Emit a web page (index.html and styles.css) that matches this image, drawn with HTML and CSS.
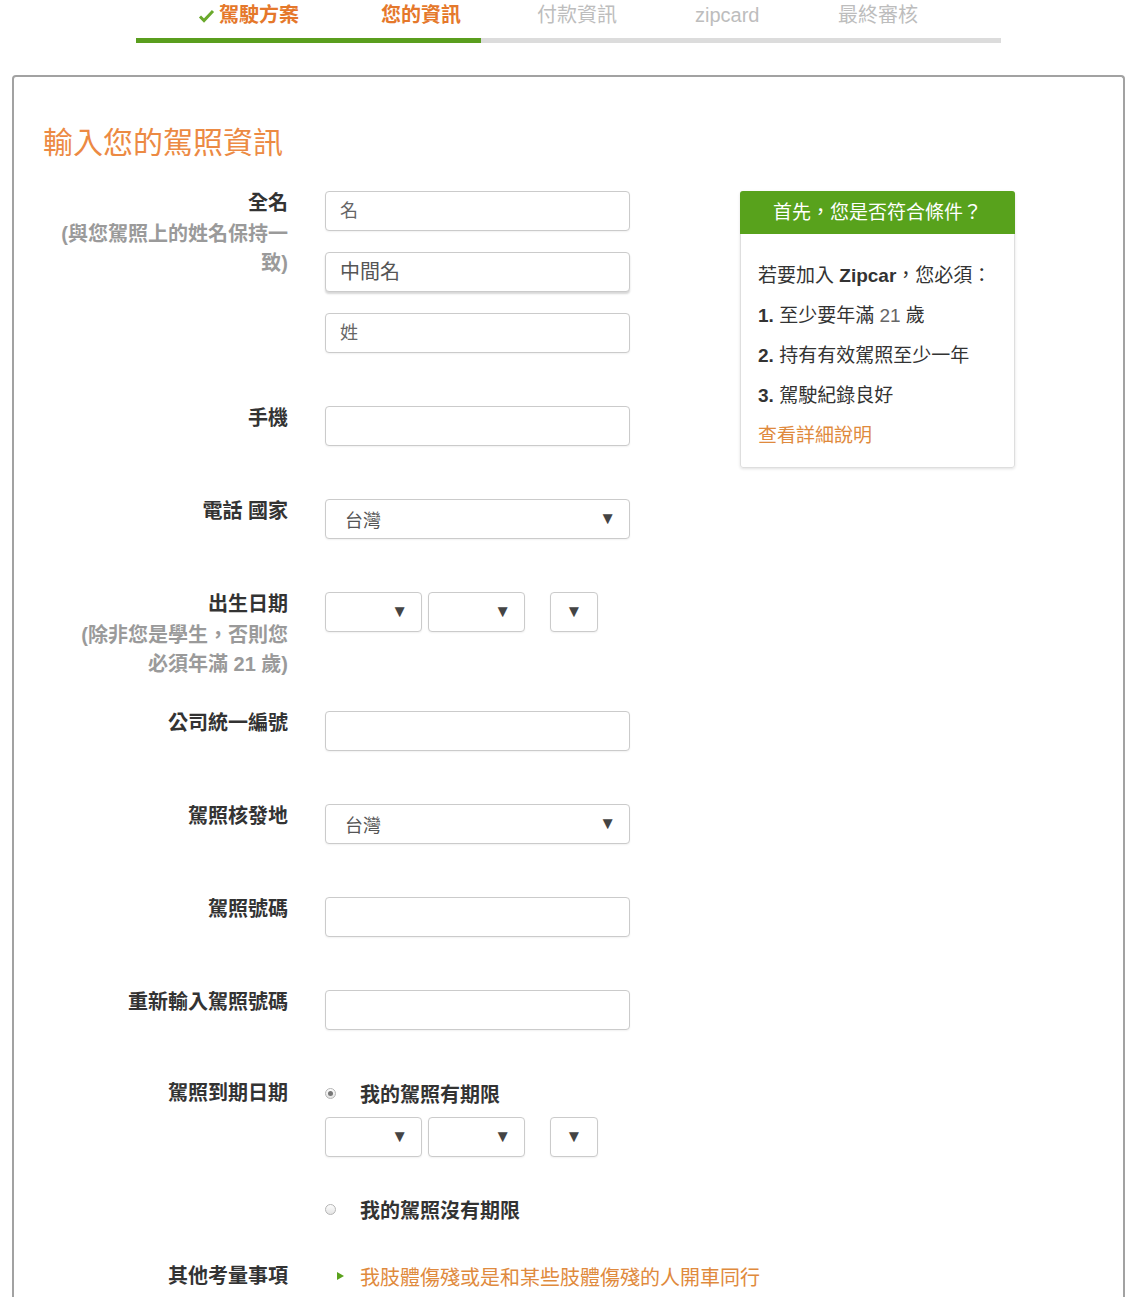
FILE: index.html
```html
<!DOCTYPE html>
<html lang="zh-Hant">
<head>
    <meta charset="UTF-8">
    <meta name="viewport" content="width=device-width, initial-scale=1.0">
    <title>輸入您的駕照資訊</title>
    <link rel="stylesheet" href="styles.css">
</head>
<body>

    <!-- Etapas do cadastro -->
    <div class="progress">
        <ol class="steps">
            <li class="step done">
                <svg class="check" width="17" height="14" viewBox="0 0 17 14"><polyline points="2,7.5 6,11.5 15,2" fill="none" stroke="#6aa92c" stroke-width="3"/></svg>駕駛方案
            </li>
            <li class="step current">您的資訊</li>
            <li class="step">付款資訊</li>
            <li class="step">zipcard</li>
            <li class="step">最終審核</li>
        </ol>
        <div class="bar"><div class="bar-fill" style="width: 39.9%"></div></div>
    </div>

    <div class="panel">
        <h2 class="panel-title">輸入您的駕照資訊</h2>

        <div class="panel-body">
            <form class="form">
                <div class="row">
                    <div class="label">全名<span class="hint">(與您駕照上的姓名保持一<br>致)</span></div>
                    <div class="field stack">
                        <input class="text" type="text" placeholder="名">
                        <input class="text text-focus" type="text" placeholder="中間名">
                        <input class="text" type="text" placeholder="姓">
                    </div>
                </div>

                <div class="row">
                    <div class="label">手機</div>
                    <div class="field"><input class="text" type="text"></div>
                </div>

                <div class="row">
                    <div class="label">電話 國家</div>
                    <div class="field">
                        <div class="select"><span>台灣</span><span class="arrow">▼</span></div>
                    </div>
                </div>

                <div class="row row-tall">
                    <div class="label">出生日期<span class="hint">(除非您是學生，否則您<br>必須年滿 21 歲)</span></div>
                    <div class="field">
                        <div class="date">
                            <div class="select select-sm"><span class="arrow">▼</span></div>
                            <div class="select select-sm"><span class="arrow">▼</span></div>
                            <div class="select select-xs"><span class="arrow">▼</span></div>
                        </div>
                    </div>
                </div>

                <div class="row">
                    <div class="label">公司統一編號</div>
                    <div class="field"><input class="text" type="text"></div>
                </div>

                <div class="row">
                    <div class="label">駕照核發地</div>
                    <div class="field">
                        <div class="select"><span>台灣</span><span class="arrow">▼</span></div>
                    </div>
                </div>

                <div class="row">
                    <div class="label">駕照號碼</div>
                    <div class="field"><input class="text" type="text"></div>
                </div>

                <div class="row">
                    <div class="label">重新輸入駕照號碼</div>
                    <div class="field"><input class="text" type="text"></div>
                </div>

                <div class="row row-expiry">
                    <div class="label">駕照到期日期</div>
                    <div class="field">
                        <label class="radio"><span class="dot checked"></span>我的駕照有期限</label>
                        <div class="date date-expiry">
                            <div class="select select-sm"><span class="arrow">▼</span></div>
                            <div class="select select-sm"><span class="arrow">▼</span></div>
                            <div class="select select-xs"><span class="arrow">▼</span></div>
                        </div>
                        <label class="radio radio-second"><span class="dot"></span>我的駕照沒有期限</label>
                    </div>
                </div>

                <div class="row row-last">
                    <div class="label">其他考量事項</div>
                    <div class="field">
                        <a class="toggle" href="#"><span class="tri"></span>我肢體傷殘或是和某些肢體傷殘的人開車同行</a>
                    </div>
                </div>
            </form>

            <!-- Caixa lateral de requisitos -->
            <div class="aside">
                <div class="aside-head">首先，您是否符合條件？</div>
                <div class="aside-body">
                    <p>若要加入 <b>Zipcar</b>，您必須：</p>
                    <p><b>1.</b> 至少要年滿 <span class="num">21</span> 歲</p>
                    <p><b>2.</b> 持有有效駕照至少一年</p>
                    <p><b>3.</b> 駕駛紀錄良好</p>
                    <p><a class="more" href="#">查看詳細說明</a></p>
                </div>
            </div>
        </div>
    </div>

</body>
</html>
```

FILE: styles.css
```css
/* Corpo da página */
body {
    margin: 0;
    padding: 0;
    background: #fff;
    color: #333;
    font-family: "Liberation Sans", "Noto Sans CJK TC", sans-serif;
}

/* Barra de etapas */
.progress {
    width: 865px;
    margin-left: 136px;
}

.steps {
    display: grid;
    grid-template-columns: 183px 156px 158px 143px auto;
    list-style: none;
    margin: 0;
    padding: 1px 0 0 62px;
    height: 28px;
    line-height: 28px;
    font-size: 20px;
}

.step {
    color: #bdbdbd;
    white-space: nowrap;
}

.step.done,
.step.current {
    color: #e5782b;
    font-weight: bold;
}

.check {
    margin-right: 4px;
    vertical-align: -1px;
}

.bar {
    height: 5px;
    margin-top: 9px;
    background: #dcdcdc;
}

.bar-fill {
    height: 100%;
    background: #5a9e1e;
}

/* Painel principal */
.panel {
    margin: 32px 15px 0 12px;
    padding: 48px 29px 9px;
    border: 2px solid #a2a2a2;
    border-bottom: none;
    border-radius: 4px 4px 0 0;
}

.panel-title {
    margin: 0 0 30px;
    font-size: 30px;
    line-height: 36px;
    font-weight: normal;
    color: #ec8a43;
}

.panel-body {
    display: flex;
    align-items: flex-start;
}

/* Linhas do formulário */
.form {
    width: 587px;
}

.row {
    display: grid;
    grid-template-columns: 245px 305px;
    column-gap: 37px;
    align-items: start;
    margin-bottom: 53px;
}

.row-tall {
    margin-bottom: 32px;
}

.row-expiry {
    margin-top: -2px;
    margin-bottom: 43px;
}

.row-last {
    margin-bottom: 0;
}

.label {
    text-align: right;
    font-size: 20px;
    line-height: 24px;
    font-weight: bold;
    color: #333;
}

.hint {
    display: block;
    margin-top: 5px;
    line-height: 29px;
    color: #9a9a9a;
}

.stack {
    display: flex;
    flex-direction: column;
    gap: 21px;
}

.text {
    display: block;
    width: 305px;
    height: 40px;
    box-sizing: border-box;
    padding: 0 14px;
    border: 1px solid #cbcbcb;
    border-radius: 4px;
    box-shadow: 0 1px 2px rgba(0, 0, 0, 0.06);
    font-family: inherit;
    font-size: 18px;
    color: #444;
    outline: none;
}

.text::placeholder {
    color: #666;
}

.text-focus {
    font-size: 20px;
    box-shadow: 0 2px 2px rgba(0, 0, 0, 0.16);
}

.text-focus::placeholder {
    color: #555;
}

/* Caixas de seleção */
.select {
    display: flex;
    justify-content: space-between;
    align-items: center;
    width: 305px;
    height: 40px;
    box-sizing: border-box;
    padding: 0 13px 0 19px;
    border: 1px solid #cbcbcb;
    border-radius: 4px;
    box-shadow: 0 1px 2px rgba(0, 0, 0, 0.06);
    background: #fff;
    font-size: 18px;
    color: #555;
}

.arrow {
    font-size: 17px;
    color: #444;
}

.date {
    display: flex;
}

.select-sm {
    width: 97px;
    justify-content: flex-end;
    margin-right: 6px;
}

.select-xs {
    width: 48px;
    justify-content: center;
    padding: 0;
    margin-left: 19px;
}

.date-expiry {
    margin-top: 12px;
}

/* Opções de rádio */
.radio {
    display: flex;
    align-items: center;
    height: 24px;
    font-size: 20px;
    font-weight: bold;
    color: #333;
}

.radio-second {
    margin-top: 40px;
}

.dot {
    width: 11px;
    height: 11px;
    box-sizing: border-box;
    margin: 0 24px 0 0;
    border: 1px solid #b5b5b5;
    border-radius: 50%;
    background: linear-gradient(#fdfdfd, #e4e4e4);
    position: relative;
}

.dot.checked::after {
    content: "";
    position: absolute;
    left: 2px;
    top: 2px;
    width: 5px;
    height: 5px;
    border-radius: 50%;
    background: #777;
}

.toggle {
    display: flex;
    align-items: center;
    height: 24px;
    font-size: 20px;
    color: #df8a3d;
    text-decoration: none;
    white-space: nowrap;
}

.tri {
    width: 0;
    height: 0;
    margin: 0 16px 0 12px;
    border-left: 7px solid #5aa21c;
    border-top: 4px solid transparent;
    border-bottom: 4px solid transparent;
}

/* Caixa lateral */
.aside {
    width: 275px;
    margin-left: 110px;
    box-sizing: border-box;
    border: 1px solid #dedede;
    border-radius: 3px;
    box-shadow: 0 1px 3px rgba(0, 0, 0, 0.12);
}

.aside-head {
    margin: -1px -1px 0;
    height: 43px;
    line-height: 43px;
    text-align: center;
    background: #58a21c;
    color: #fff;
    font-size: 19px;
    border-radius: 3px 3px 0 0;
}

.aside-body {
    padding: 22px 17px 11px;
    font-size: 19px;
    line-height: 40px;
    color: #333;
}

.aside-body p {
    margin: 0;
}

.num {
    color: #666;
}

.more {
    color: #df8a3d;
    text-decoration: none;
}
```
